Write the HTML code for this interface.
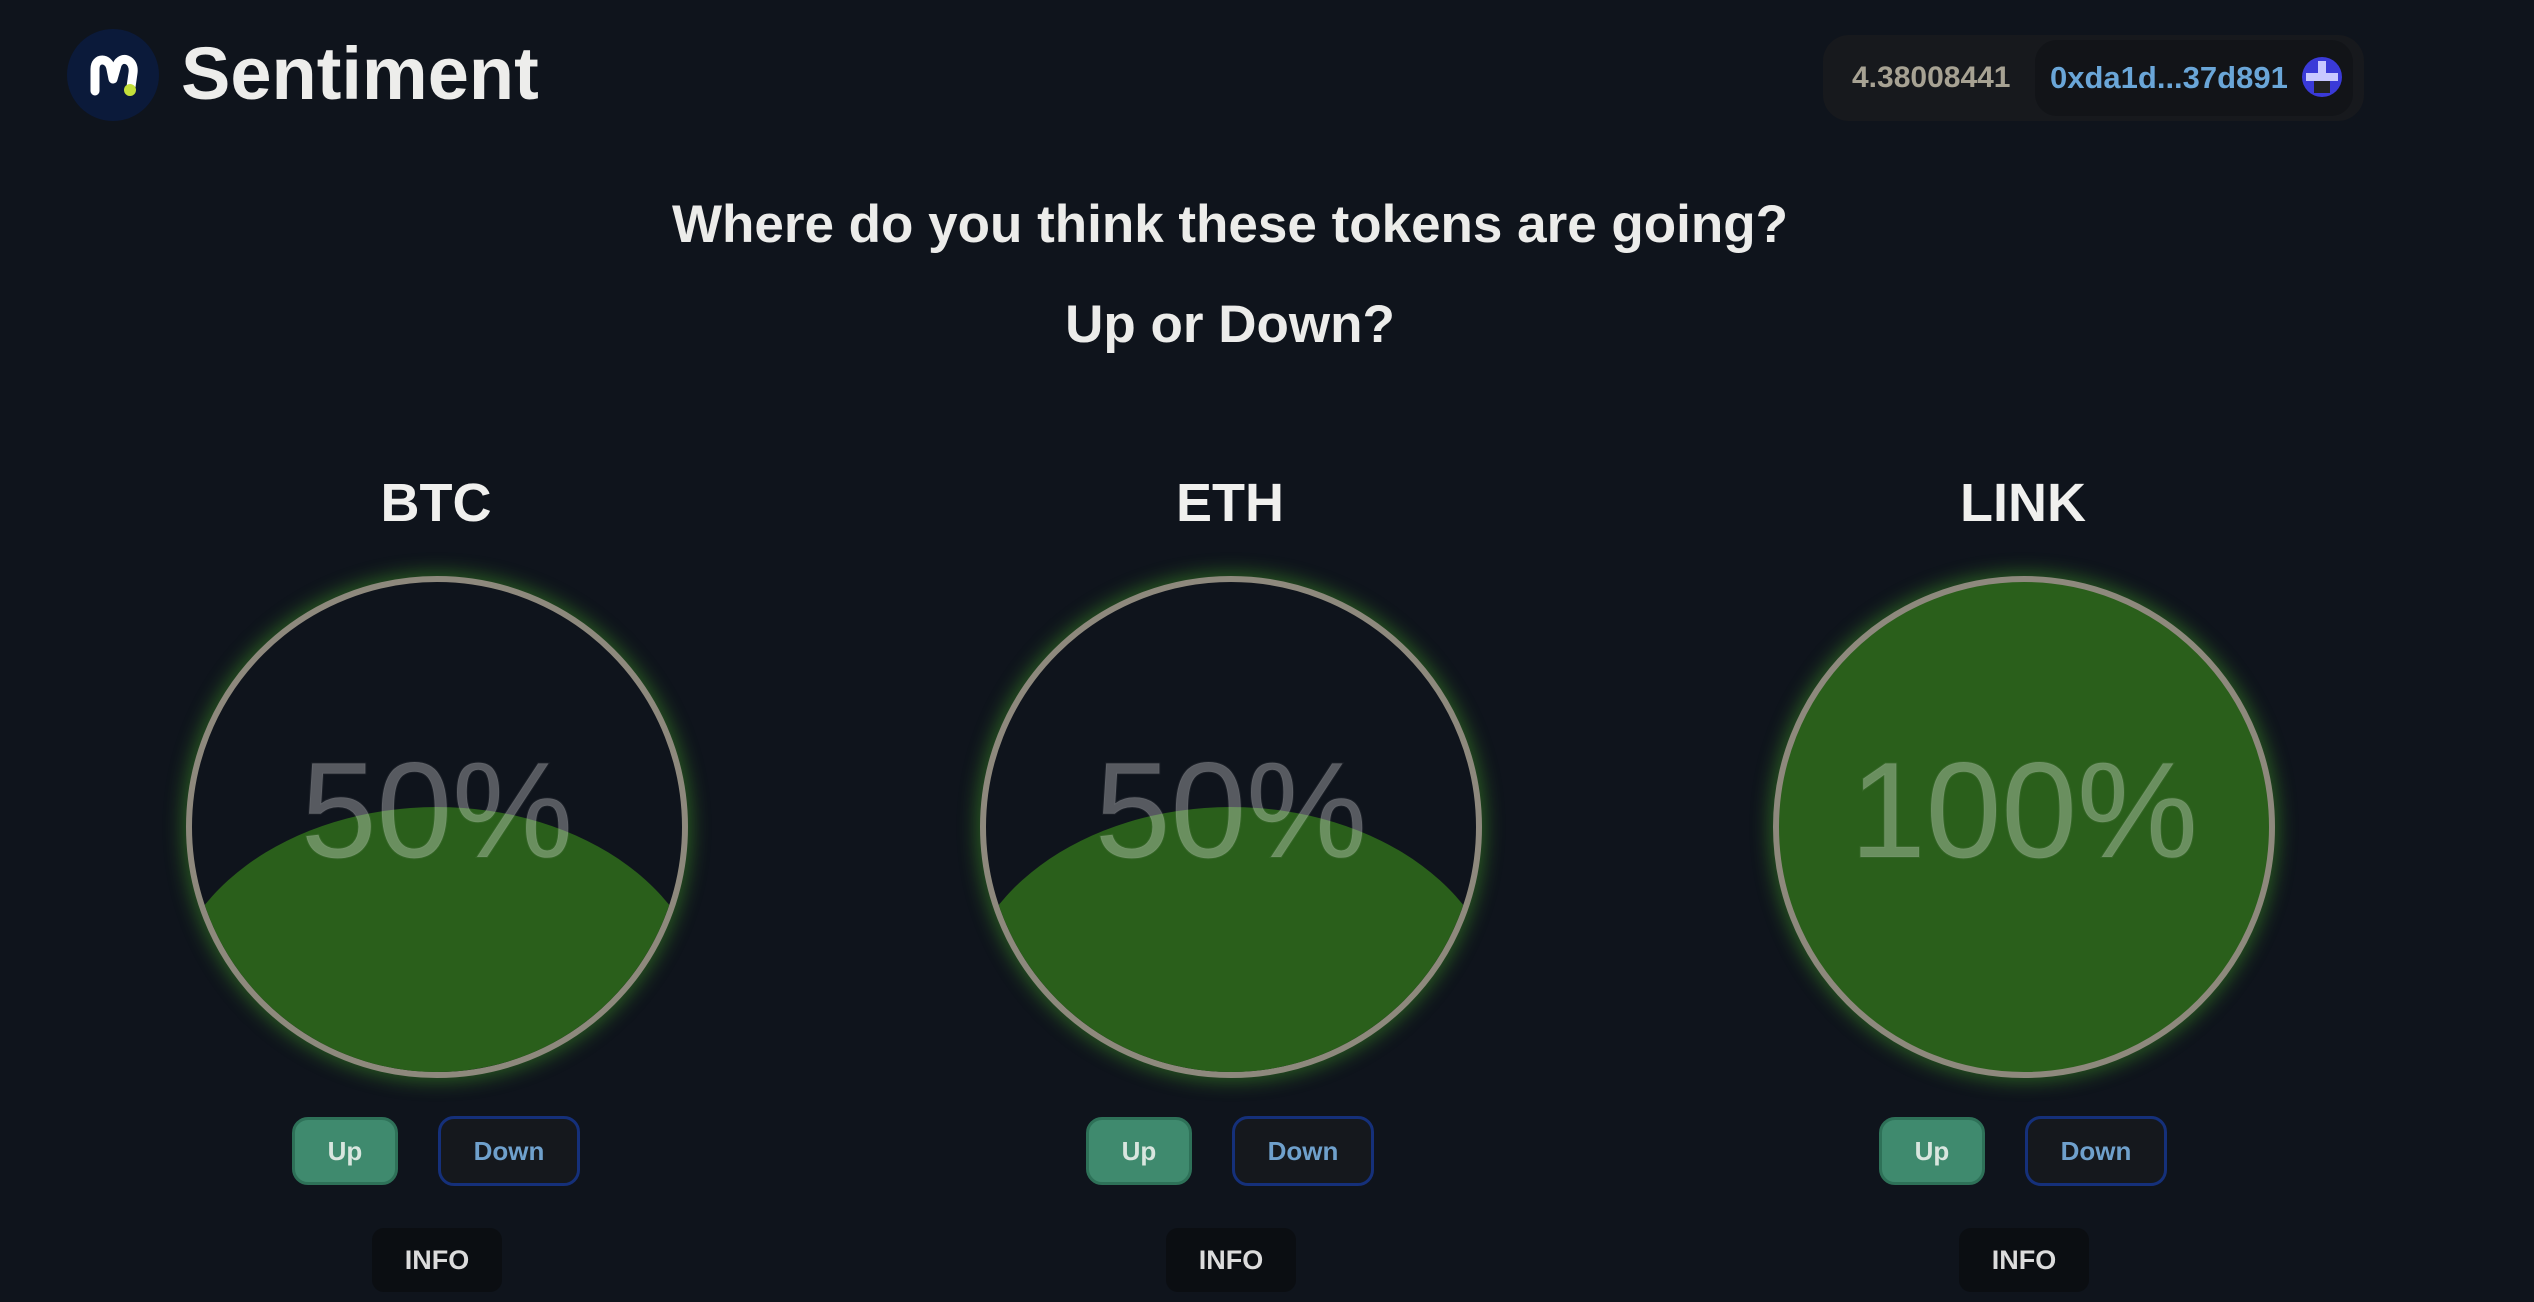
<!DOCTYPE html>
<html><head><meta charset="utf-8"><style>
*{margin:0;padding:0;box-sizing:border-box}
body{width:2534px;height:1302px;background:#0f141c;font-family:"Liberation Sans",sans-serif;position:relative;overflow:hidden;color:#e8e8e6}
.a{position:absolute}
.c{text-align:center}
.h{font-size:53px;font-weight:700;color:#ececea;left:0;width:2460px}
.tk{font-size:54px;font-weight:700;width:400px;color:#f0f0ee}
.circ{width:502px;height:502px;border-radius:50%;border:6px solid #8e897d;overflow:hidden;box-shadow:0 0 18px 4px rgba(70,170,40,.45);background:#0f141c}
.pct{position:absolute;left:0;right:0;top:160px;text-align:center;font-size:136px;font-weight:400;-webkit-text-stroke:2px rgba(255,255,255,.05);color:rgba(255,255,255,.3);line-height:1}
.up{width:106px;height:68px;border-radius:16px;background:#3f8a6e;border:3px solid #2e7158;color:#d9e6df;font-size:26px;font-weight:700;line-height:62px;text-align:center}
.dn{width:142px;height:70px;border-radius:16px;background:#15181d;border:3px solid #15307a;color:#6fa0cc;font-size:26px;font-weight:700;line-height:64px;text-align:center}
.info{width:130px;height:64px;border-radius:12px;background:#0b0e12;color:#dcdcdc;font-size:27px;font-weight:700;line-height:64px;text-align:center}
</style></head><body>
<div class="a" style="left:67px;top:29px;width:92px;height:92px;border-radius:50%;background:#0b1a3a"></div>
<svg class="a" style="left:67px;top:29px" width="92" height="92" viewBox="0 0 92 92">
<path d="M28 62 V40 C28 28 42 28 44 40 L46 50 L50 36 C54 26 68 30 66 44 L64 58" fill="none" stroke="#fff" stroke-width="9" stroke-linecap="round" stroke-linejoin="round"/>
<circle cx="63" cy="61" r="6" fill="#c5e03a"/></svg>
<div class="a" style="left:181px;top:26px;font-size:74px;font-weight:700;color:#ededeb;line-height:96px">Sentiment</div>
<div class="a" style="left:1823px;top:35px;width:541px;height:86px;border-radius:26px;background:#17191d"></div>
<div class="a" style="left:1852px;top:55px;font-size:30px;font-weight:700;color:#a7a293;line-height:46px">4.38008441</div>
<div class="a" style="left:2035px;top:40px;width:318px;height:76px;border-radius:22px;background:#121418"></div>
<div class="a" style="left:2050px;top:55px;font-size:31px;color:#6aa6d8;line-height:46px;font-weight:700">0xda1d...37d891</div>
<div class="a" style="left:2302px;top:57px;width:40px;height:40px;border-radius:50%;background:#3a3ad8;overflow:hidden">
<div class="a" style="left:16px;top:4px;width:8px;height:32px;background:#c8c8ff"></div><div class="a" style="left:4px;top:16px;width:32px;height:8px;background:#c8c8ff"></div><div class="a" style="left:12px;top:24px;width:16px;height:12px;background:#222"></div></div>
<div class="a c h" style="top:194px">Where do you think these tokens are going?</div>
<div class="a c h" style="top:294px">Up or Down?</div>

<div class="a c tk" style="left:236px;top:472px">BTC</div>
<div class="a c tk" style="left:1030px;top:472px">ETH</div>
<div class="a c tk" style="left:1823px;top:472px">LINK</div>

<div class="a circ" style="left:186px;top:576px"><svg class="a" style="left:0;top:0" width="490" height="490"><ellipse cx="245" cy="425" rx="270" ry="200" fill="#2a5f1b"/></svg><div class="pct">50%</div></div>
<div class="a circ" style="left:980px;top:576px"><svg class="a" style="left:0;top:0" width="490" height="490"><ellipse cx="245" cy="425" rx="270" ry="200" fill="#2a5f1b"/></svg><div class="pct">50%</div></div>
<div class="a circ" style="left:1773px;top:576px;background:#2a5f1b"><div class="pct">100%</div></div>

<div class="a up" style="left:292px;top:1117px">Up</div>
<div class="a dn" style="left:438px;top:1116px">Down</div>
<div class="a info" style="left:372px;top:1228px">INFO</div>
<div class="a up" style="left:1086px;top:1117px">Up</div>
<div class="a dn" style="left:1232px;top:1116px">Down</div>
<div class="a info" style="left:1166px;top:1228px">INFO</div>
<div class="a up" style="left:1879px;top:1117px">Up</div>
<div class="a dn" style="left:2025px;top:1116px">Down</div>
<div class="a info" style="left:1959px;top:1228px">INFO</div>
</body></html>
